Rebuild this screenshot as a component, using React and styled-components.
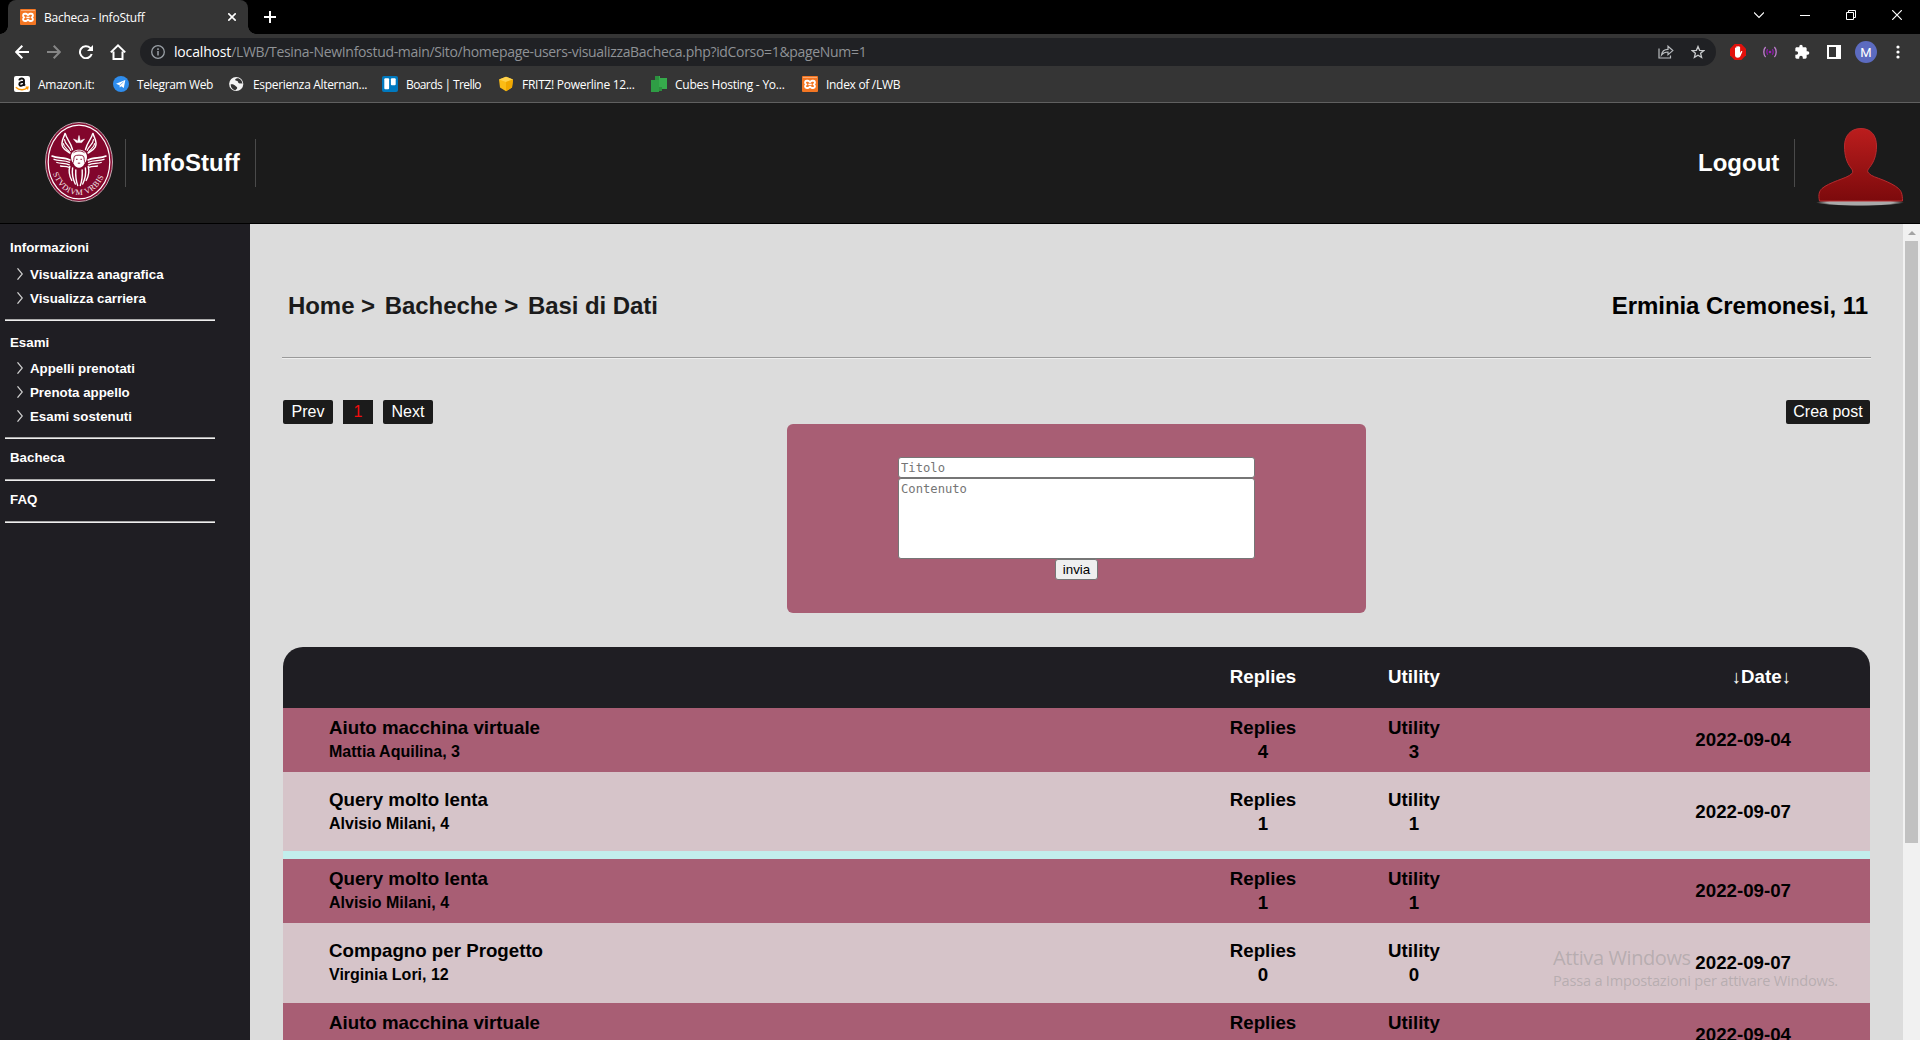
import React from "react";
import styled, { createGlobalStyle, css } from "styled-components";

const Global = createGlobalStyle`
  * { box-sizing: border-box; }
  html, body { margin: 0; padding: 0; }
  body { width: 1920px; height: 1040px; overflow: hidden; background: #000; font-family: "Liberation Sans", Arial, sans-serif; }
  svg { display: block; flex: none; }
  h1, h2, h3, p { margin: 0; }
`;

const uiFont = css`font-family: "Open Sans", "Noto Sans", sans-serif;`;

/* ---------- browser chrome ---------- */
const Screen = styled.div`
  width: 1920px; height: 1040px; display: flex; flex-direction: column; overflow: hidden;
`;
const TabStrip = styled.div`
  height: 34px; background: #000; display: flex; padding-left: 8px; flex: none;
`;
const Tab = styled.div`
  ${uiFont}
  position: relative; width: 240px; height: 34px; background: #353535; border-radius: 8px 8px 0 0;
  display: flex; align-items: center; padding: 0 12px; color: #fff; font-size: 12px;
  &::before, &::after {
    content: ""; position: absolute; bottom: 0; width: 8px; height: 8px;
  }
  &::before { left: -8px; background: radial-gradient(circle at 0 0, #000 7.5px, #353535 8px); }
  &::after { right: -8px; background: radial-gradient(circle at 100% 0, #000 7.5px, #353535 8px); }
`;
const TabTitle = styled.span`
  flex: 1; margin-left: 8px; letter-spacing: ${p => p.$ls || 0}px; white-space: nowrap;
`;
const NewTab = styled.div`
  width: 44px; display: flex; align-items: center; justify-content: center;
`;
const WindowControls = styled.div`
  margin-left: auto; display: flex; height: 29px;
`;
const WindowButton = styled.div`
  width: 46px; display: flex; align-items: center; justify-content: center;
`;
const Toolbar = styled.div`
  height: 36px; background: #353535; display: flex; align-items: center; padding: 0 6px; flex: none;
`;
const Slot = styled.div`
  width: ${p => p.$w || 32}px; height: 32px; display: flex; align-items: center; justify-content: center; flex: none;
`;
const Address = styled.div`
  ${uiFont}
  flex: 1; height: 28px; margin: 0 6px; border-radius: 14px; background: #202124;
  display: flex; align-items: center; padding: 0 2px 0 8px; font-size: 14px; color: #8f9296;
`;
const Url = styled.span`
  flex: 1; margin-left: 6px; letter-spacing: -0.32px; white-space: nowrap; line-height: 20px;
  b { font-weight: 400; color: #fff; letter-spacing: -0.17px; }
`;
const Profile = styled.div`
  width: 22px; height: 22px; border-radius: 50%; background: #5c6bc0; color: #fff;
  font: 13px Roboto, sans-serif; display: flex; align-items: center; justify-content: center;
`;
const Bookmarks = styled.div`
  ${uiFont}
  height: 33px; background: #353535; border-bottom: 1px solid #606060; padding: 0 0 4px 14px;
  display: flex; align-items: center; color: #fff; font-size: 12px; flex: none;
`;
const Bookmark = styled.div`
  width: ${p => p.$w}px; display: flex; align-items: center; gap: 8px; white-space: nowrap;
  letter-spacing: ${p => p.$ls}px;
`;

/* ---------- site header ---------- */
const Header = styled.header`
  height: 121px; background: #1b1b1b; border-bottom: 1px solid #000; display: flex; align-items: center;
  padding: 0 15px 2px 45px; flex: none; color: #fff;
`;
const Divider = styled.i`
  width: 1px; height: 48px; background: #4a4a4a; margin: 2px ${p => p.$r || 0}px 0 ${p => p.$l || 0}px;
`;
const SiteLink = styled.h1`
  font-size: 24px; line-height: 28px; margin: 1px ${p => p.$r}px 0 ${p => p.$l}px; width: ${p => p.$w}px; white-space: nowrap;
`;
const Avatar = styled.div`margin-top: 9px;`;
const Spacer = styled.div`flex: 1;`;

/* ---------- body ---------- */
const Body = styled.div`flex: 1; min-height: 0; display: flex;`;
const Sidebar = styled.nav`
  width: 250px; background: #1f1e23; color: #fff; padding: 13px 35px 0 5px; font-weight: 700; font-size: 13.3px; flex: none;
`;
const SideTitle = styled.div`
  height: ${p => p.$h || 24}px; line-height: 22px; padding-left: 5px;
`;
const SideItem = styled.div`
  height: 24px; display: flex; align-items: center; padding-left: 12px; gap: 7px; white-space: nowrap;
`;
const SideRule = styled.div`
  height: 2px; border-top: 1px solid #a9a9a9; background: #eee; margin: ${p => p.$m};
`;
const Main = styled.main`
  flex: 1; min-width: 0; background: #dcdcdc; padding: 51px 32px 0; display: flex; flex-direction: column; overflow: hidden;
`;
const CrumbRow = styled.div`
  height: 60px; display: flex; align-items: center; justify-content: space-between; padding: 2px 3px 0 6px; flex: none;
`;
const Crumbs = styled.h2`
  font-size: 24px; color: #1b1b1b; letter-spacing: -0.06px; white-space: nowrap; display: flex; gap: 9.7px;
`;
const User = styled.h2`font-size: 24px; color: #000; white-space: nowrap; letter-spacing: -0.06px;`;
const Rule = styled.div`
  height: 2px; background: #eee; border-top: 1px solid #9a9a9a; margin: 22px 0 41px; flex: none;
`;
const Controls = styled.div`display: flex; gap: 10px; padding: 0 1px; flex: none;`;
const Pill = styled.span`
  width: ${p => p.$w}px; height: 24px; line-height: 23px; background: #1b1b1b; color: ${p => p.$active ? "#f20d0d" : "#fff"};
  border-radius: ${p => p.$active ? 0 : 2}px; text-align: center; font-size: 16px; margin-left: ${p => p.$end ? "auto" : 0};
`;
const PostForm = styled.form`
  align-self: center; width: 579px; height: 189px; background: #a85e74; border-radius: 6px; margin: 0 0 34px; flex: none;
  display: flex; flex-direction: column; align-items: center; padding-top: 33px;
`;
const field = css`
  width: 357px; border: 1px solid #767676; border-radius: 3px; background: #fff; padding: 2px; margin: 0; outline: 0;
  font: 12.18px/15px "DejaVu Sans Mono", monospace; resize: none; display: block;
  &::placeholder { color: #757575; opacity: 1; }
`;
const TitleInput = styled.input`${field} height: 21px;`;
const BodyInput = styled.textarea`${field} height: 81px; padding-top: 3px;`;
const Send = styled.button`
  width: 43px; height: 21px; border: 1px solid #767676; border-radius: 3px; background: #efefef; color: #000;
  font: 13.33px "Liberation Sans", Arial, sans-serif; padding: 0;
`;
const Board = styled.section`margin: 0 1px; flex: none; font-weight: 700; font-size: 18.72px; line-height: 24px; color: #000;`;
const rowGrid = css`
  display: grid; grid-template-columns: 1fr 151px 151px 301.5px; align-items: center; padding-left: 46px; padding-right: 79px;
`;
const BoardHead = styled.div`
  ${rowGrid} height: 61px; padding-bottom: 2px; background: #1f1e23; color: #fff; border-radius: 20px 20px 0 0;
`;
const Row = styled.div`
  ${rowGrid} height: ${p => p.$h}px; background: ${p => p.$light ? "#d6c4c9" : "#a85e74"};
`;
const Subject = styled.div`small { display: block; font-size: 16px; }`;
const Stat = styled.div`text-align: center; span { display: block; }`;
const When = styled.div`text-align: right;`;
const Separator = styled.div`height: 8px; background: #c2eeec;`;

const Scrollbar = styled.div`width: 17px; background: #f1f1f1; flex: none; padding: 0 1px 0 2px;`;
const ScrollArrow = styled.div`height: 17px; display: flex; align-items: center; justify-content: center;`;
const Thumb = styled.div`height: 602px; width: 13px; background: #c1c1c1;`;

const Watermark = styled.div`
  ${uiFont}
  position: absolute; left: 1553px; top: 944px; color: rgba(140, 140, 140, 0.42); white-space: nowrap; pointer-events: none;
`;
const WatermarkTitle = styled.div`font-size: 20px; line-height: 27px; letter-spacing: -0.4px;`;
const WatermarkText = styled.div`font-size: 14.6px; line-height: 19px; letter-spacing: -0.22px;`;

/* ---------- drawings ---------- */
const Xampp = () => (
  <svg width="16" height="16" viewBox="0 0 16 16">
    <rect width="16" height="16" rx="1" fill="#f37623" />
    <path d="M1 1.500h14" stroke="#f9b585" strokeWidth=".8" />
    <path d="M4.700 4.700h1.100C7 4.700 7.200 6 8 6s1-1.300 2.200-1.300h1.100c2 0 2.100 2.400.6 3.700 1.500 1.400 1.400 3.600-.6 3.600h-1.100C9 12 8.800 10.800 8 10.800S7 12 5.800 12H4.700c-2 0-2.100-2.200-.6-3.600-1.500-1.300-1.400-3.700.6-3.700z" fill="none" stroke="#fff" strokeWidth="1.900" />
    <path d="M6.300 8.400h3.400" stroke="#fff" strokeWidth="1.500" />
  </svg>
);
const Amazon = () => (
  <svg width="16" height="16" viewBox="0 0 16 16">
    <rect width="16" height="16" rx="2" fill="#fff" />
    <path d="M5.300 4.300C5.600 1.900 10 1.700 10 4.400v4l.9 1.200M10 5.800C6.900 5.800 5.300 6.500 5.300 8.200c0 2.200 3.500 2.100 4.600-.4" fill="none" stroke="#111" strokeWidth="1.900" />
    <path d="M1.800 11.200c3.300 3.300 8.700 3.300 11.700.6M11.600 11.200h2.400l-.6 2.300" fill="none" stroke="#f90" strokeWidth="1.300" />
  </svg>
);
const Telegram = () => (
  <svg width="16" height="16" viewBox="0 0 16 16">
    <circle cx="8" cy="8" r="8" fill="#2f8ded" />
    <path d="M3 7.800 12.300 4 10.800 12 8.200 10.200 6.800 11.500 6.500 9.200z" fill="#fff" />
    <path d="M6.600 9.200 10.500 5.900" stroke="#2f8ded" strokeWidth=".6" />
  </svg>
);
const Globe = () => (
  <svg width="16" height="16" viewBox="0 0 16 16">
    <circle cx="7.200" cy="8" r="7.100" fill="#f4f4f4" />
    <path d="M1.700 8.200c1.900-.3 4 .4 4.600 1.600.5 1 2.100.9 1.900 2.200-.1 1-1.300 1.300-1.600 2.200-2.500-.1-5-2.300-4.900-6zM8 2.200c-1.600.4-2.500 1.500-1.300 2.400.9.700 2.200.3 2.300 1.500.1 1.200 1.300 1.600 2.600 1.300.7-.2 1.400.2 1.700.8C13.500 4.500 11 2 8 2.200z" fill="#353535" />
  </svg>
);
const Trello = () => (
  <svg width="16" height="16" viewBox="0 0 16 16">
    <rect width="16" height="16" rx="2" fill="#0079bf" />
    <rect x="2.300" y="2.300" width="4.800" height="11" rx="1" fill="#fff" />
    <rect x="8.900" y="2.300" width="4.800" height="7" rx="1" fill="#fff" />
  </svg>
);
const Fritz = () => (
  <svg width="16" height="16" viewBox="0 0 16 16">
    <path d="M1 3.500 8 .8l7 2.700-1 7.900L8 15.200 2 11.400z" fill="#fbbc15" />
    <path d="M1 3.500 8 6l7-2.500L8 .8z" fill="#ffd24c" />
    <path d="M8 6v9.200l6-3.800 1-7.900z" fill="#f0a800" />
  </svg>
);
const Cubes = () => (
  <svg width="16" height="16" viewBox="0 0 16 16">
    <path d="M5 0h4v2h7v11h-5v2H8v-3H5z" fill="#36ab4c" />
    <path d="M0 4h8v12H0z" fill="#2f9d45" />
    <path d="M4 0h4v4H4zM8 11h3v4H8z" fill="#2b8f3e" />
  </svg>
);
const Line = ({ d, s = 14, w = 2, c = "#fff", fill = "none", vb }) => (
  <svg width={s} height={s} viewBox={vb || `0 0 ${s} ${s}`}>
    <path d={d} fill={fill} stroke={c} strokeWidth={w} />
  </svg>
);
const ChevronBox = styled.span`width: 6px; overflow: hidden; flex: none;`;
const ChevronIcon = () => (
  <ChevronBox><Line s={12} w={1.2} c="#d0d0d0" d="M.5 .3 5.300 6 .5 11.700" /></ChevronBox>
);

const Wings = () => (
  <g fill="none" stroke="#fff" strokeLinecap="round">
    <path strokeWidth="1.500" d="M20 11.500c-1 4-4.800 8.500-2.300 13.500 1.600 3.200 4.300 4.300 7.300 6" />
    <path strokeWidth="1.400" d="M20.500 12c.7 4.500 5.300 8 7 15.500" />
    <path strokeWidth="1.200" d="M19.500 17.500c.2 4.500 4.500 6.500 6.300 11M18.300 21.500c.5 4 4 5.500 6.200 8.500" />
    <path strokeWidth="1.600" d="M7 34c5.500 2.800 12 1 18 4" />
    <path strokeWidth="1.300" d="M9 37.300c4.500 2 10 .7 15.500 3M11.800 40.500c4 1.300 8.200.3 12.500 2.300M15.500 44c3 .6 5.500 0 8.500 1.300" />
    <path strokeWidth="1.400" d="M24.800 44.500c-1.300 4.500-.5 9.500 2 14M27.600 46c-.8 5.500 0 10.500 2.700 16M30.800 48c-.3 6 .2 11 1.900 15.500" />
  </g>
);
const Emblem = () => (
  <svg width="68" height="80" viewBox="0 0 68 80">
    <ellipse cx="34" cy="40" rx="33.500" ry="39.500" fill="#860b31" stroke="#c3aab2" strokeWidth="1" />
    <ellipse cx="34" cy="40" rx="30.800" ry="36.800" fill="#82062c" stroke="#fff" strokeWidth="1.200" />
    <Wings />
    <g transform="translate(68 0) scale(-1 1)"><Wings /></g>
    <path d="M31.300 20.600 28.500 17l3.600 1.500.5 1.300L34 13.500l1.400 6.300.5-1.300 3.600-1.500-2.800 3.600z" fill="#fff" stroke="#fff" strokeWidth=".6" />
    <path d="M26 35.500c-1-10.500 17-10.500 16 0-.4 3.500-1.500 5-2.800 6.500-2 5-8.400 5-10.400 0-1.300-1.500-2.400-3-2.800-6.500z" fill="#fff" />
    <path d="M28.500 30.800c3-2.500 8-2.500 11 0M27.800 41c1.500-2 .5-4.500 1.700-6.800 1.500-1.400 7.500-1.400 9 0 1.200 2.300.2 4.800 1.700 6.800M31 37.300h1.600M35.400 37.300H37M32.800 41.200h2.400" fill="none" stroke="#82062c" strokeWidth=".9" />
    <path id="motto" d="M7 49.500C13 66 23 73 34 73S55 66 61 49.500" fill="none" />
    <text fill="#f3e6ea" fontFamily="Liberation Serif, serif" fontSize="8.200">
      <textPath href="#motto" startOffset="2" textLength="69">STVDIVM VRBIS</textPath>
    </text>
  </svg>
);
const Person = () => (
  <svg width="90" height="82" viewBox="0 0 90 82">
    <defs>
      <linearGradient id="red" x1="0" y1="0" x2="0" y2="1">
        <stop offset="0" stopColor="#bb1d1d" /><stop offset="1" stopColor="#7c0a0c" />
      </linearGradient>
      <radialGradient id="shade"><stop offset=".75" stopColor="#aaa" /><stop offset="1" stopColor="#aaa" stopOpacity="0" /></radialGradient>
    </defs>
    <ellipse cx="45" cy="76.500" rx="44" ry="3.500" fill="url(#shade)" />
    <path d="M46 2.500c10.500 0 15.500 7.500 15.500 17.500 0 9-2.500 16-7 21.500-2 2.500-2.500 4-1 5.500 3 3.500 8.500 4.500 14.500 7 6.500 2.600 12 5.500 15.500 8.500 2.500 2.300 4 5 4 12.500H4.500c-1.500-7 0-10 2.500-12.500C10.500 59.500 16 57 22.500 54.500c6-2.300 11.500-4 14.500-7 1.500-1.500.5-3.500-1-5.500-4.500-5.500-6.500-13-6.500-22C29.500 10 35.500 2.500 46 2.500z" fill="url(#red)" stroke="#b82a2e" strokeWidth="1" />
  </svg>
);

const bookmarks = [
  [Amazon, "Amazon.it:", 99, -0.28],
  [Telegram, "Telegram Web", 116, -0.38],
  [Globe, "Esperienza Alternan...", 153, -0.33],
  [Trello, "Boards | Trello", 116, -0.6],
  [Fritz, "FRITZ! Powerline 12...", 153, -0.27],
  [Cubes, "Cubes Hosting - Yo...", 151, -0.22],
  [Xampp, "Index of /LWB", 120, -0.3],
];

const posts = [
  { t: "Aiuto macchina virtuale", a: "Mattia Aquilina, 3", r: 4, u: 3, d: "2022-09-04", h: 64 },
  { t: "Query molto lenta", a: "Alvisio Milani, 4", r: 1, u: 1, d: "2022-09-07", h: 79, light: true, sep: true },
  { t: "Query molto lenta", a: "Alvisio Milani, 4", r: 1, u: 1, d: "2022-09-07", h: 64 },
  { t: "Compagno per Progetto", a: "Virginia Lori, 12", r: 0, u: 0, d: "2022-09-07", h: 80, light: true },
  { t: "Aiuto macchina virtuale", a: "Mattia Aquilina, 3", r: 4, u: 3, d: "2022-09-04", h: 64 },
];

const BrowserChrome = () => (
  <>
    <TabStrip>
      <Tab>
        <Xampp />
        <TabTitle $ls={-0.24}>Bacheca - InfoStuff</TabTitle>
        <Line s={8} w={1.600} d="M.3.3 7.700 7.700M7.700.3.3 7.700" />
      </Tab>
      <NewTab><Line s={12} d="M6 0v12M0 6h12" /></NewTab>
      <WindowControls>
        <WindowButton><Line s={10} w={1.100} d="M0 2.500 5 7.500 10 2.500" /></WindowButton>
        <WindowButton><Line s={10} w={1} d="M0 5.500h10" /></WindowButton>
        <WindowButton><Line s={10} w={1} d="M.5 2.500h7v7h-7zM2.500 2.500V.5h7v7h-2" /></WindowButton>
        <WindowButton><Line s={10} w={1.200} d="M.2.2 9.800 9.800M9.800.2.2 9.800" /></WindowButton>
      </WindowControls>
    </TabStrip>
    <Toolbar>
      <Slot><Line d="M14 7H1.500M7.300.8 1.200 7l6.100 6.200" /></Slot>
      <Slot><Line c="#868686" d="M0 7h12.500M6.700.8 12.800 7l-6.100 6.200" /></Slot>
      <Slot><svg width="14" height="14" viewBox="0 0 14 14"><path d="M12.700 9A6 6 0 1 1 11.200 2.900L12.500 4.200" fill="none" stroke="#fff" strokeWidth="2" /><path d="M14 0v6H8z" fill="#fff" /></svg></Slot>
      <Slot><svg width="16" height="16" viewBox="0 0 16 16"><path d="M3.500 7.500V15h9V7.500M.8 8.400 8 1.400l7.200 7" fill="none" stroke="#fff" strokeWidth="2" /></svg></Slot>
      <Address>
        <Slot $w={20}><svg width="14" height="14" viewBox="0 0 14 14"><circle cx="7" cy="7" r="6.300" fill="none" stroke="#9aa0a6" strokeWidth="1.300" /><path d="M7 6v4.500M7 3.300v1.600" stroke="#9aa0a6" strokeWidth="1.500" /></svg></Slot>
        <Url><b>localhost</b>/LWB/Tesina-NewInfostud-main/Sito/homepage-users-visualizzaBacheca.php?idCorso=1&amp;pageNum=1</Url>
        <Slot><svg width="16" height="14" viewBox="0 0 16 14"><path d="M1 3.500V13h11.500v-2.500M3.500 10C4 6.500 6.500 4.300 10 4.300V1.200L14.800 5.600 10 9.600V7C7.300 7 5.200 7.800 3.500 10z" fill="none" stroke="#b9bcbf" strokeWidth="1.200" /></svg></Slot>
        <Slot><svg width="14" height="14" viewBox="0 0 14 14"><path d="M7 1.500 8.600 5.300l4.200.3-3.200 2.700 1 4.100L7 10.200l-3.600 2.200 1-4.100L1.200 5.600l4.200-.3z" fill="none" stroke="#c9cbcd" strokeWidth="1.300" /></svg></Slot>
      </Address>
      <Slot><svg width="16" height="16" viewBox="0 0 16 16"><path d="M4.700 0h6.600L16 4.700v6.600L11.300 16H4.700L0 11.300V4.700z" fill="#e1110c" /><path d="M5 9V4.200c0-.8 1.200-.8 1.200 0V3c0-.9 1.300-.9 1.300 0v-.4c0-.9 1.300-.9 1.300 0V3c0-.8 1.300-.8 1.300 0v6l1-1.700c.4-.7 1.500-.3 1.200.5l-1.700 4c-.5 1.300-1.300 2-2.800 2C5.800 13.800 5 12.500 5 11z" fill="#fff" /></svg></Slot>
      <Slot><svg width="14" height="12" viewBox="0 0 14 12"><circle cx="7" cy="6" r="1.300" fill="#a01fc0" /><path d="M4.800 3.300c-1.300 1.300-1.300 4.100 0 5.400M9.200 3.300c1.300 1.300 1.300 4.100 0 5.400" fill="none" stroke="#8b1aa8" strokeWidth="1.300" /><path d="M2.600 1C.2 3.400.2 8.600 2.600 11M11.400 1c2.400 2.400 2.400 7.600 0 10" fill="none" stroke="#c07fd0" strokeWidth="1.300" /></svg></Slot>
      <Slot><svg width="16" height="16" viewBox="0 0 24 24"><path fill="#fff" d="M20.500 11H19V7c0-1.100-.9-2-2-2h-4V3.500a2.500 2.500 0 0 0-5 0V5H4c-1.100 0-2 .9-2 2v3.800h1.500a2.700 2.700 0 0 1 0 5.400H2V20c0 1.100.9 2 2 2h3.800v-1.500a2.700 2.700 0 0 1 5.400 0V22H17c1.100 0 2-.9 2-2v-4h1.500a2.500 2.500 0 0 0 0-5z" /></svg></Slot>
      <Slot><svg width="14" height="14" viewBox="0 0 14 14"><path d="M0 0h14v14H0zM2 2v10h7V2z" fill="#fff" fillRule="evenodd" /></svg></Slot>
      <Slot><Profile>M</Profile></Slot>
      <Slot><svg width="4" height="14" viewBox="0 0 4 14"><circle cx="2" cy="2" r="1.600" fill="#fff" /><circle cx="2" cy="7" r="1.600" fill="#fff" /><circle cx="2" cy="12" r="1.600" fill="#fff" /></svg></Slot>
    </Toolbar>
    <Bookmarks>
      {bookmarks.map(([Icon, label, w, ls]) => (
        <Bookmark key={label} $w={w} $ls={ls}><Icon />{label}</Bookmark>
      ))}
    </Bookmarks>
  </>
);

const Nav = () => (
  <Sidebar>
    <SideTitle $h={25}>Informazioni</SideTitle>
    <SideItem><ChevronIcon />Visualizza anagrafica</SideItem>
    <SideItem><ChevronIcon />Visualizza carriera</SideItem>
    <SideRule $m="9px 0 11px" />
    <SideTitle>Esami</SideTitle>
    <SideItem><ChevronIcon />Appelli prenotati</SideItem>
    <SideItem><ChevronIcon />Prenota appello</SideItem>
    <SideItem><ChevronIcon />Esami sostenuti</SideItem>
    <SideRule $m="9px 0 8px" />
    <SideTitle>Bacheca</SideTitle>
    <SideRule $m="8px 0" />
    <SideTitle>FAQ</SideTitle>
    <SideRule $m="8px 0" />
  </Sidebar>
);

export default function App() {
  return (
    <Screen>
      <Global />
      <BrowserChrome />
      <Header>
        <Emblem />
        <Divider $l={12} />
        <SiteLink $l={15} $r={14} $w={100}>InfoStuff</SiteLink>
        <Divider />
        <Spacer />
        <SiteLink $l={0} $r={14} $w={82}>Logout</SiteLink>
        <Divider $r={20} />
        <Avatar><Person /></Avatar>
      </Header>
      <Body>
        <Nav />
        <Main>
          <CrumbRow>
            <Crumbs><span>Home &gt;</span><span>Bacheche &gt;</span><span>Basi di Dati</span></Crumbs>
            <User>Erminia Cremonesi, 11</User>
          </CrumbRow>
          <Rule />
          <Controls>
            <Pill $w={50}>Prev</Pill>
            <Pill $w={30} $active>1</Pill>
            <Pill $w={50}>Next</Pill>
            <Pill $w={84} $end>Crea post</Pill>
          </Controls>
          <PostForm>
            <TitleInput placeholder="Titolo" />
            <BodyInput placeholder="Contenuto" />
            <Send type="button">invia</Send>
          </PostForm>
          <Board>
            <BoardHead><span /><Stat>Replies</Stat><Stat>Utility</Stat><When>↓Date↓</When></BoardHead>
            {posts.map((p, i) => (
              <React.Fragment key={i}>
                <Row $h={p.h} $light={p.light}>
                  <Subject>{p.t}<small>{p.a}</small></Subject>
                  <Stat>Replies<span>{p.r}</span></Stat>
                  <Stat>Utility<span>{p.u}</span></Stat>
                  <When>{p.d}</When>
                </Row>
                {p.sep && <Separator />}
              </React.Fragment>
            ))}
          </Board>
        </Main>
        <Scrollbar>
          <ScrollArrow><svg width="8" height="4" viewBox="0 0 8 4"><path d="M4 0 8 4H0z" fill="#a3a3a3" /></svg></ScrollArrow>
          <Thumb />
        </Scrollbar>
      </Body>
      <Watermark>
        <WatermarkTitle>Attiva Windows</WatermarkTitle>
        <WatermarkText>Passa a Impostazioni per attivare Windows.</WatermarkText>
      </Watermark>
    </Screen>
  );
}
